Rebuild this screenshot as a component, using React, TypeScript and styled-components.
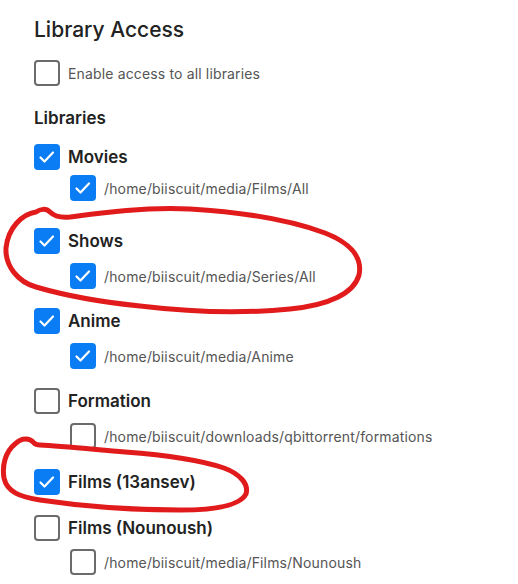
import React from 'react'
import styled, { createGlobalStyle } from 'styled-components'

const GlobalStyle = createGlobalStyle`
  html, body {
    margin: 0;
    padding: 0;
    background: #fff;
  }
  body {
    font-family: Inter, 'Noto Sans', 'Liberation Sans', sans-serif;
    -webkit-font-smoothing: antialiased;
  }
`

type Library = {
  name: string
  checked: boolean
  paths: { path: string; checked: boolean }[]
  subGap?: number
  spaceAfter?: number
}

const libraries: Library[] = [
  { name: 'Movies', checked: true, paths: [{ path: '/home/biiscuit/media/Films/All', checked: true }], subGap: 5, spaceAfter: 8 },
  { name: 'Shows', checked: true, paths: [{ path: '/home/biiscuit/media/Series/All', checked: true }] },
  { name: 'Anime', checked: true, paths: [{ path: '/home/biiscuit/media/Anime', checked: true }] },
  { name: 'Formation', checked: false, paths: [{ path: '/home/biiscuit/downloads/qbittorrent/formations', checked: false }], spaceAfter: 1 },
  { name: 'Films (13ansev)', checked: true, paths: [], spaceAfter: 1 },
  { name: 'Films (Nounoush)', checked: false, paths: [{ path: '/home/biiscuit/media/Films/Nounoush', checked: false }], subGap: 8 },
]

const Page = styled.div`
  position: relative;
  width: 518px;
  height: 584px;
  overflow: hidden;
  padding: 18px 0 0 34px;
  box-sizing: border-box;
`

const Title = styled.h2`
  margin: 0;
  font-size: 21px;
  line-height: 24px;
  font-weight: 500;
  color: #222;
`

const Row = styled.label`
  display: flex;
  align-items: center;
  gap: 8px;
  height: 26px;
`

const EnableRow = styled(Row)`
  margin-top: 18px;
`

const Box = styled.span<{ $checked: boolean }>`
  flex: none;
  width: 26px;
  height: 26px;
  box-sizing: border-box;
  border-radius: 4px;
  display: flex;
  align-items: center;
  justify-content: center;
  background: ${({ $checked }) => ($checked ? '#0a7df4' : '#fff')};
  border: ${({ $checked }) => ($checked ? 'none' : '2px solid #6b6b6b')};
`

const HintText = styled.span`
  font-size: 14px;
  letter-spacing: 0.15px;
  color: #555;
`

const SectionTitle = styled.h3`
  margin: 22px 0 16px;
  font-size: 17px;
  line-height: 20px;
  font-weight: 600;
  color: #222;
`

const List = styled.div`
  display: flex;
  flex-direction: column;
  gap: 19px;
`

const Group = styled.div<{ $subGap: number; $after: number }>`
  display: flex;
  flex-direction: column;
  gap: ${({ $subGap }) => $subGap}px;
  margin-bottom: ${({ $after }) => $after}px;
`

const LibName = styled.span`
  font-size: 17px;
  font-weight: 600;
  color: #222;
`

const SubRow = styled(Row)`
  padding-left: 36px;
`

const Marks = styled.svg`
  position: absolute;
  inset: 0;
  pointer-events: none;
`

const Check = ({ checked }: { checked: boolean }) => (
  <Box $checked={checked}>
    {checked && (
      <svg width="26" height="26" viewBox="0 0 26 26">
        <path d="M6.5 13.5 L10.5 17.5 L19 8.5" fill="none" stroke="#fff" strokeWidth="2.2" strokeLinecap="round" strokeLinejoin="round" />
      </svg>
    )}
  </Box>
)

export default function App() {
  return (
    <Page>
      <GlobalStyle />
      <Title>Library Access</Title>
      <EnableRow>
        <Check checked={false} />
        <HintText>Enable access to all libraries</HintText>
      </EnableRow>
      <SectionTitle>Libraries</SectionTitle>
      <List>
        {libraries.map(lib => (
          <Group key={lib.name} $subGap={lib.subGap ?? 9} $after={lib.spaceAfter ?? 0}>
            <Row>
              <Check checked={lib.checked} />
              <LibName>{lib.name}</LibName>
            </Row>
            {lib.paths.map(p => (
              <SubRow key={p.path}>
                <Check checked={p.checked} />
                <HintText>{p.path}</HintText>
              </SubRow>
            ))}
          </Group>
        ))}
      </List>
      <Marks width="518" height="584">
        <path
          d="M50 212 C46 208 40 209 36 212 C22 214 8 228 6 248 C5 266 18 282 36 287 C60 294 100 302 140 306 C190 312 240 314 290 309 C330 305 354 293 359 275 C363 256 348 242 325 233 C290 220 240 212 190 209 C140 207 100 213 70 217 C60 218 54 216 50 212"
          fill="none" stroke="#e11b1b" strokeWidth="5" strokeLinecap="round" strokeLinejoin="round"
        />
        <path
          d="M34 443 C30 438 22 437 15 444 C5 452 2 466 4 478 C7 492 20 497 40 500 C80 506 130 510 180 510 C215 510 240 506 246 494 C249 484 240 474 224 468 C200 460 165 455 125 452 C90 449 60 446 40 445 C37 445 35 444 34 443"
          fill="none" stroke="#e11b1b" strokeWidth="5" strokeLinecap="round" strokeLinejoin="round"
        />
      </Marks>
    </Page>
  )
}
